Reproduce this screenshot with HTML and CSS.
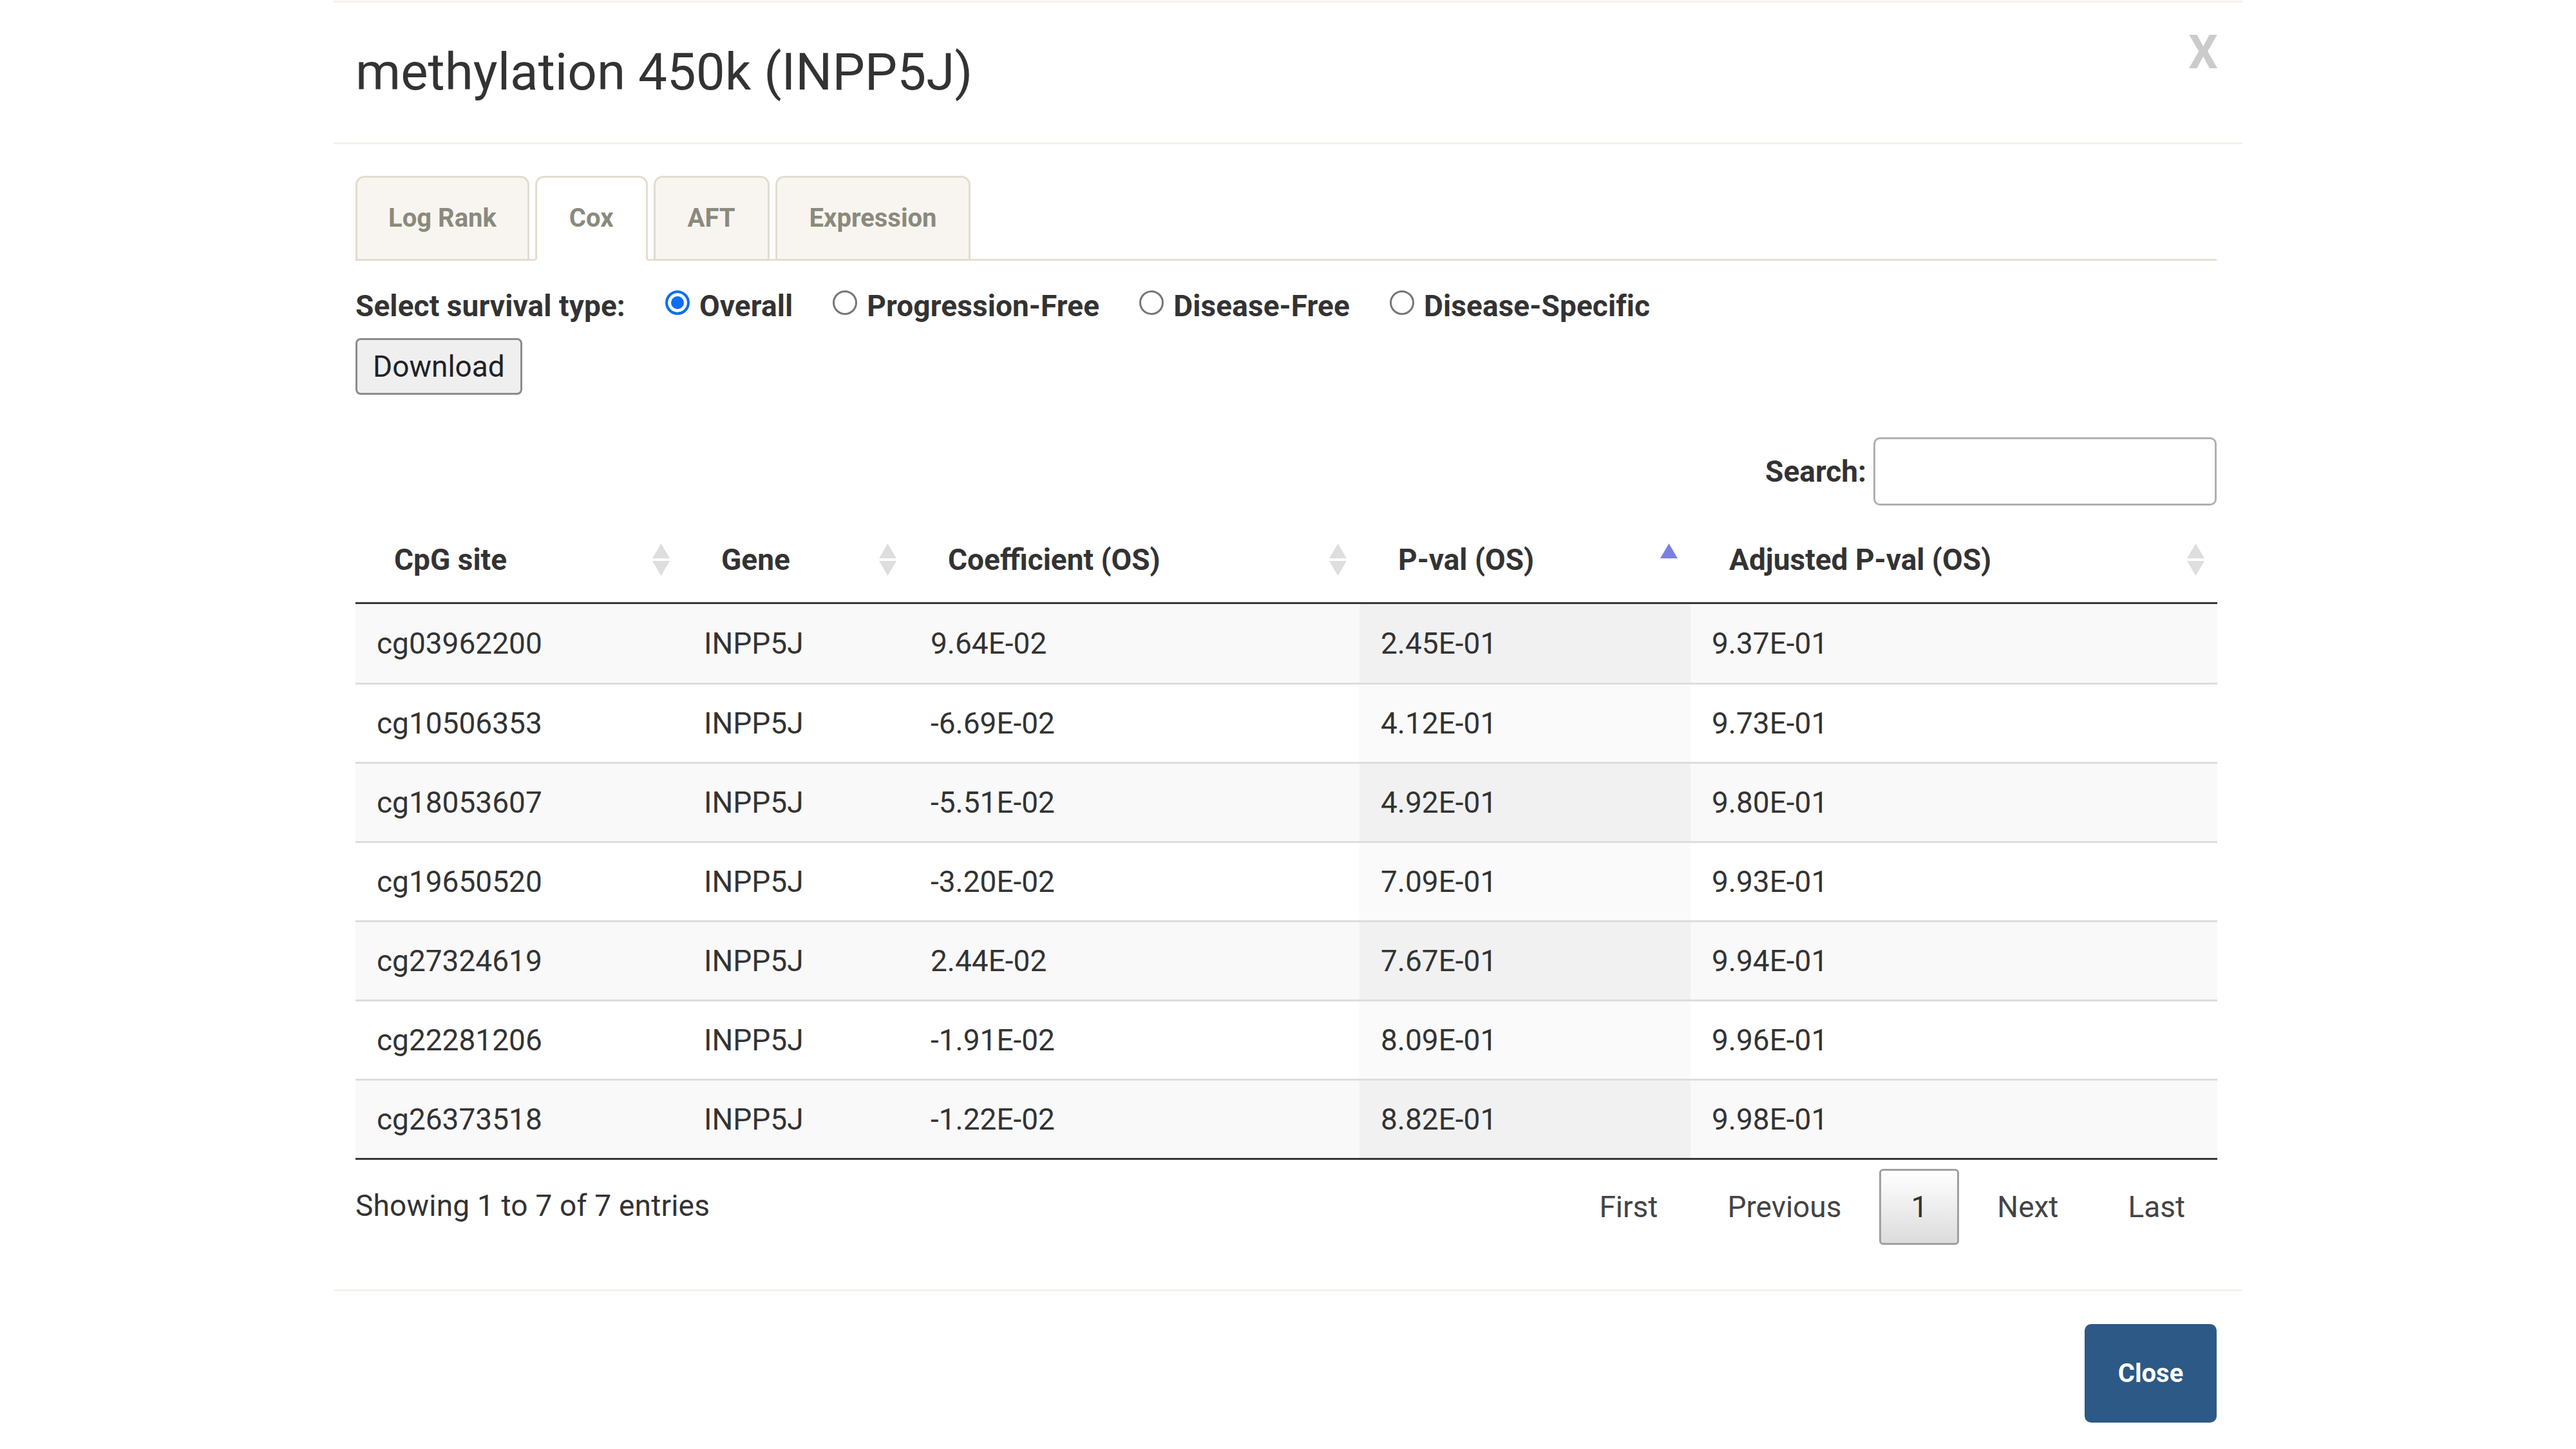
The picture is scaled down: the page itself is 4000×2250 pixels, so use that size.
FILE: index.html
```html
<!DOCTYPE html>
<html lang="en">
<head>
<meta charset="utf-8">
<title>methylation 450k (INPP5J)</title>
<link rel="stylesheet" href="styles.css">
</head>
<body>
<div class="modal">
  <div class="modal-header">
    <h4 class="modal-title">methylation 450k (INPP5J)</h4>
    <span class="close">X</span>
  </div>
  <div class="modal-body">
    <ul class="tabs">
      <li class="tab">Log Rank</li>
      <li class="tab active">Cox</li>
      <li class="tab">AFT</li>
      <li class="tab">Expression</li>
    </ul>
    <div class="survival">
      <span class="survival-label">Select survival type:</span>
      <label class="opt"><input type="radio" name="st" checked>Overall</label>
      <label class="opt"><input type="radio" name="st">Progression-Free</label>
      <label class="opt"><input type="radio" name="st">Disease-Free</label>
      <label class="opt"><input type="radio" name="st">Disease-Specific</label>
    </div>
    <button class="download">Download</button>
    <div class="search-row">
      <label class="search-label">Search:</label>
      <input class="search-input" type="search">
    </div>
    <table class="data">
      <colgroup>
        <col class="c1"><col class="c2"><col class="c3"><col class="c4"><col class="c5">
      </colgroup>
      <thead>
        <tr>
          <th>CpG site<svg class="sort" viewBox="0 0 27 50"><path d="M13.5 0L27 23H0Z"/><path d="M0 27H27L13.5 50Z"/></svg></th>
          <th>Gene<svg class="sort" viewBox="0 0 27 50"><path d="M13.5 0L27 23H0Z"/><path d="M0 27H27L13.5 50Z"/></svg></th>
          <th>Coefficient (OS)<svg class="sort" viewBox="0 0 27 50"><path d="M13.5 0L27 23H0Z"/><path d="M0 27H27L13.5 50Z"/></svg></th>
          <th>P-val (OS)<svg class="sort asc" viewBox="0 0 27 50"><path d="M13.5 0L27 23H0Z"/></svg></th>
          <th>Adjusted P-val (OS)<svg class="sort" viewBox="0 0 27 50"><path d="M13.5 0L27 23H0Z"/><path d="M0 27H27L13.5 50Z"/></svg></th>
        </tr>
      </thead>
      <tbody>
        <tr><td>cg03962200</td><td>INPP5J</td><td>9.64E-02</td><td class="sorted">2.45E-01</td><td>9.37E-01</td></tr>
        <tr><td>cg10506353</td><td>INPP5J</td><td>-6.69E-02</td><td class="sorted">4.12E-01</td><td>9.73E-01</td></tr>
        <tr><td>cg18053607</td><td>INPP5J</td><td>-5.51E-02</td><td class="sorted">4.92E-01</td><td>9.80E-01</td></tr>
        <tr><td>cg19650520</td><td>INPP5J</td><td>-3.20E-02</td><td class="sorted">7.09E-01</td><td>9.93E-01</td></tr>
        <tr><td>cg27324619</td><td>INPP5J</td><td>2.44E-02</td><td class="sorted">7.67E-01</td><td>9.94E-01</td></tr>
        <tr><td>cg22281206</td><td>INPP5J</td><td>-1.91E-02</td><td class="sorted">8.09E-01</td><td>9.96E-01</td></tr>
        <tr><td>cg26373518</td><td>INPP5J</td><td>-1.22E-02</td><td class="sorted">8.82E-01</td><td>9.98E-01</td></tr>
      </tbody>
    </table>
    <div class="table-foot">
      <div class="info">Showing 1 to 7 of 7 entries</div>
      <div class="paginate">
        <a class="pg">First</a>
        <a class="pg">Previous</a>
        <a class="pg current">1</a>
        <a class="pg">Next</a>
        <a class="pg">Last</a>
      </div>
    </div>
  </div>
  <div class="modal-footer">
    <button class="btn-close">Close</button>
  </div>
</div>
</body>
</html>
```
FILE: styles.css
```css
* { box-sizing: border-box; }
html, body { margin: 0; padding: 0; background: #fff; }
body {
  font-family: Roboto, "Liberation Sans", sans-serif;
  color: #333;
  font-size: 46px;
  line-height: 66px;
}
.modal {
  width: 2964px;
  margin: 1px auto 0;
  border-top: 3px solid #f5f2eb;
  background: #fff;
}
.modal-header {
  height: 220px;
  display: flex;
  justify-content: space-between;
  align-items: flex-start;
  padding: 0 38px 0 34px;
  border-bottom: 3px solid #f5f2eb;
}
.modal-title {
  margin: 64px 0 0;
  font-size: 80px;
  line-height: 88px;
  font-weight: 400;
  color: #333;
}
.close {
  margin-top: 42px;
  font-size: 72px;
  line-height: 72px;
  font-weight: 700;
  color: #cbcbcb;
}
.modal-body {
  padding: 49px 40px 69px 34px;
}
.tabs {
  list-style: none;
  margin: 0;
  padding: 0;
  display: flex;
  gap: 9px;
  border-bottom: 3px solid #e6e0d5;
  height: 132px;
}
.tab {
  height: 132px;
  display: flex;
  align-items: center;
  padding: 0 50px;
  border: 3px solid #e3dcd0;
  border-radius: 14px 14px 0 0;
  background: #f8f5f0;
  color: #8a8a7d;
  font-size: 40px;
  font-weight: 700;
}
.tab:first-child { padding: 0 48px; }
.tab.active {
  background: #fff;
  border-bottom-color: #fff;
}
.survival {
  margin-top: 37px;
  display: flex;
  align-items: center;
  font-weight: 700;
  font-size: 46px;
  line-height: 66px;
  letter-spacing: 0.1px;
  color: #333;
}
.opt {
  display: flex;
  align-items: center;
  margin-left: 62px;
}
.opt input {
  appearance: none;
  -webkit-appearance: none;
  width: 38px;
  height: 38px;
  margin: 0 15px 10px 0;
  border: 3px solid #767676;
  border-radius: 50%;
  background: #fff;
}
.opt input:checked {
  border: 4px solid #0d6ef6;
  background: #0d6ef6;
  box-shadow: inset 0 0 0 5px #fff;
}
.download {
  display: block;
  margin-top: 17px;
  height: 88px;
  padding: 0 24px;
  font-family: Roboto, "Liberation Sans", sans-serif;
  font-size: 46px;
  color: #222;
  background: #efefef;
  border: 3px solid #8c8c8c;
  border-radius: 8px;
}
.search-row {
  margin-top: 66px;
  display: flex;
  justify-content: flex-end;
  align-items: center;
}
.search-label {
  font-weight: 700;
  margin-right: 11px;
}
.search-input {
  width: 533px;
  height: 106px;
  border: 3px solid #b0b0b0;
  border-radius: 10px;
  background: #fff;
}
.data {
  margin-top: 18px;
  width: 100%;
  table-layout: fixed;
  border-collapse: separate;
  border-spacing: 0;
  border-bottom: 3px solid #383838;
}
.c1 { width: 508px; }
.c2 { width: 352px; }
.c3 { width: 699px; }
.c4 { width: 514px; }
.c5 { width: 818px; }
.data th {
  position: relative;
  text-align: left;
  font-weight: 700;
  padding: 33px 60px;
  line-height: 66px;
  border-bottom: 3px solid #383838;
}
.sort {
  position: absolute;
  right: 20px;
  top: 41px;
  width: 27px;
  height: 50px;
  fill: #dedede;
}
.sort.asc { fill: #7a7fe4; }
.data td {
  padding: 27px 33px;
  line-height: 66px;
  border-top: 3px solid #dddddd;
  background: #fff;
}
.data tbody tr:first-child td { border-top: none; padding-top: 28px; padding-bottom: 28px; }
.data tbody tr:nth-child(odd) td { background: #f9f9f9; }
.data tbody tr:nth-child(odd) td.sorted { background: #f1f1f1; }
.data tbody tr:nth-child(even) td.sorted { background: #fafafa; }
.table-foot {
  display: flex;
  justify-content: space-between;
  align-items: flex-start;
}
.info {
  padding-top: 38px;
  letter-spacing: 0.2px;
}
.paginate {
  padding-top: 14px;
  display: flex;
  gap: 10px;
}
.pg {
  display: block;
  padding: 23px 46px;
  border: 3px solid transparent;
  border-radius: 6px;
  line-height: 66px;
  color: #444;
}
.pg.current {
  border-color: #a0a0a0;
  color: #333;
  background: linear-gradient(#ffffff, #dcdcdc);
}
.modal-footer {
  border-top: 3px solid #f5f2eb;
  padding: 51px 40px 49px 34px;
  display: flex;
  justify-content: flex-end;
}
.btn-close {
  width: 205px;
  height: 153px;
  border: none;
  border-radius: 10px;
  background: #2d5986;
  color: #fff;
  font-family: Roboto, "Liberation Sans", sans-serif;
  font-size: 40px;
  font-weight: 700;
}
```
